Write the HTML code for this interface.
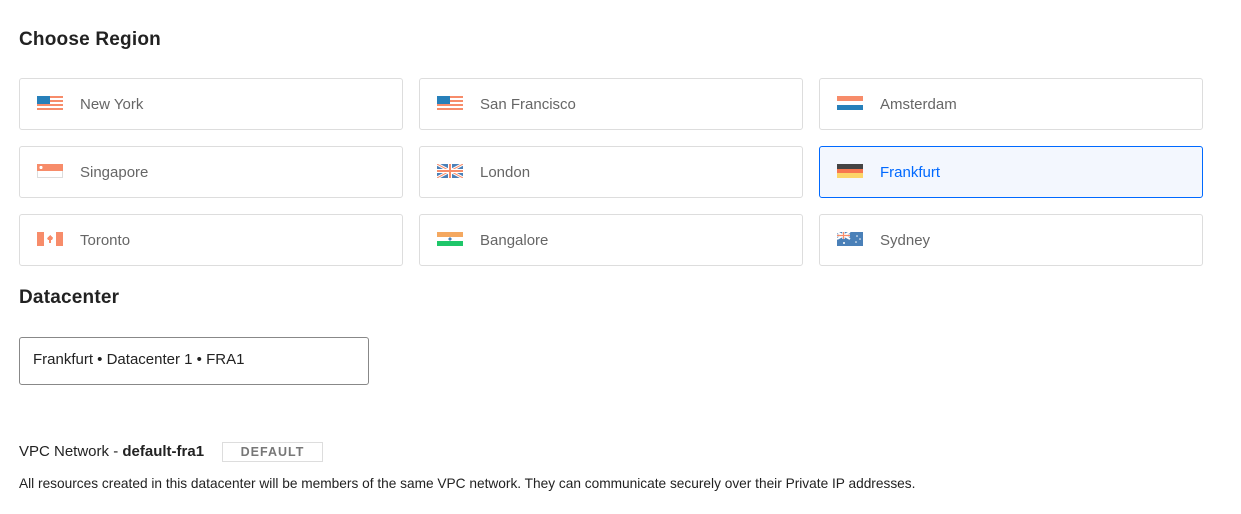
<!DOCTYPE html>
<html><head><style>
body{margin:0;width:1241px;height:514px;background:#fff;font-family:"Liberation Sans",sans-serif;position:relative;overflow:hidden}
svg{shape-rendering:crispEdges}
.h{position:absolute;left:19px;font-size:19px;font-weight:bold;color:#222;letter-spacing:0.2px}
.c{position:absolute;width:384px;height:52px;border:1px solid #ddd;border-radius:3px;box-sizing:border-box;background:#fff}
.c.s{border-color:#0069ff;background:#f3f7fe}
.c svg{position:absolute;left:17px;top:17px}
.c span{position:absolute;left:60px;top:17px;font-size:15px;color:#666}
.c.s span{color:#0069ff}
</style></head><body>
<div class="h" style="top:29px">Choose Region</div>

<div class="c" style="left:19px;top:78px"><svg width="26" height="14"><rect width="26" height="14" fill="#fff"/><rect y="0" width="26" height="2" fill="#f78c6a"/><rect y="4" width="26" height="2" fill="#f78c6a"/><rect y="8" width="26" height="2" fill="#f78c6a"/><rect y="12" width="26" height="2" fill="#f78c6a"/><rect width="13" height="8" fill="#2780ba"/></svg><span>New York</span></div>
<div class="c" style="left:419px;top:78px"><svg width="26" height="14"><rect width="26" height="14" fill="#fff"/><rect y="0" width="26" height="2" fill="#f78c6a"/><rect y="4" width="26" height="2" fill="#f78c6a"/><rect y="8" width="26" height="2" fill="#f78c6a"/><rect y="12" width="26" height="2" fill="#f78c6a"/><rect width="13" height="8" fill="#2780ba"/></svg><span>San Francisco</span></div>
<div class="c" style="left:819px;top:78px"><svg width="26" height="14"><rect width="26" height="5" fill="#f78c6a"/><rect y="5" width="26" height="4" fill="#fff"/><rect y="9" width="26" height="5" fill="#2780ba"/></svg><span>Amsterdam</span></div>

<div class="c" style="left:19px;top:146px"><svg width="26" height="14"><rect x=".5" y=".5" width="25" height="13" fill="#fff" stroke="#ddd"/><rect width="26" height="7" fill="#f78c6a"/><circle cx="4" cy="3.5" r="1.5" fill="#fff"/></svg><span>Singapore</span></div>
<div class="c" style="left:419px;top:146px"><svg width="26" height="14" style="shape-rendering:auto"><rect width="26" height="14" fill="#4a80b8"/><path d="M0 0L26 14M26 0L0 14" stroke="#fff" stroke-width="3"/><path d="M0 0L26 14M26 0L0 14" stroke="#f78c6a" stroke-width="1"/><path d="M13 0V14M0 7H26" stroke="#fff" stroke-width="4"/><path d="M13 0V14M0 7H26" stroke="#f78c6a" stroke-width="2"/></svg><span>London</span></div>
<div class="c s" style="left:819px;top:146px"><svg width="26" height="14"><rect width="26" height="5" fill="#444"/><rect y="5" width="26" height="4" fill="#f7774f"/><rect y="9" width="26" height="5" fill="#fcd568"/></svg><span>Frankfurt</span></div>

<div class="c" style="left:19px;top:214px"><svg width="26" height="14"><rect width="26" height="14" fill="#fff"/><rect width="7" height="14" fill="#f78c6a"/><rect x="19" width="7" height="14" fill="#f78c6a"/><path d="M13 3l3 3-1 2h-1v3h-2V8h-1l-1-2z" fill="#f78c6a"/></svg><span>Toronto</span></div>
<div class="c" style="left:419px;top:214px"><svg width="26" height="14"><rect width="26" height="5" fill="#f4a860"/><rect y="5" width="26" height="4" fill="#fff"/><rect y="9" width="26" height="5" fill="#1ec669"/><circle cx="13" cy="7" r="1.5" fill="#4a80b8"/></svg><span>Bangalore</span></div>
<div class="c" style="left:819px;top:214px"><svg width="26" height="14" style="shape-rendering:auto"><rect width="26" height="14" fill="#4a80b8"/><path d="M0 0L13 7M13 0L0 7" stroke="#fff" stroke-width="2"/><path d="M6.5 0V7M0 3.5H13" stroke="#fff" stroke-width="2.5"/><path d="M6.5 0V7M0 3.5H13" stroke="#f78c6a" stroke-width="1.2"/><circle cx="20" cy="4" r=".8" fill="#fff"/><circle cx="23" cy="7" r=".8" fill="#fff"/><circle cx="19" cy="10" r=".8" fill="#fff"/><circle cx="7" cy="11" r="1" fill="#fff"/></svg><span>Sydney</span></div>

<div class="h" style="top:287px">Datacenter</div>
<div style="position:absolute;left:19px;top:337px;width:350px;height:48px;border:1px solid #888;border-radius:3px;box-sizing:border-box;font-size:15px;color:#222;padding:13px 0 0 13px">Frankfurt • Datacenter 1 • FRA1</div>

<div style="position:absolute;left:19px;top:443px;font-size:15px;color:#222">VPC Network - <b>default-fra1</b></div>
<div style="position:absolute;left:222px;top:442px;width:101px;height:20px;border:1px solid #ddd;box-sizing:border-box;font-size:12.5px;font-weight:bold;color:#777;text-align:center;line-height:18px;letter-spacing:1px">DEFAULT</div>
<div style="position:absolute;left:19px;top:476px;font-size:13.7px;color:#222;white-space:nowrap">All resources created in this datacenter will be members of the same VPC network. They can communicate securely over their Private IP addresses.</div>
</body></html>
